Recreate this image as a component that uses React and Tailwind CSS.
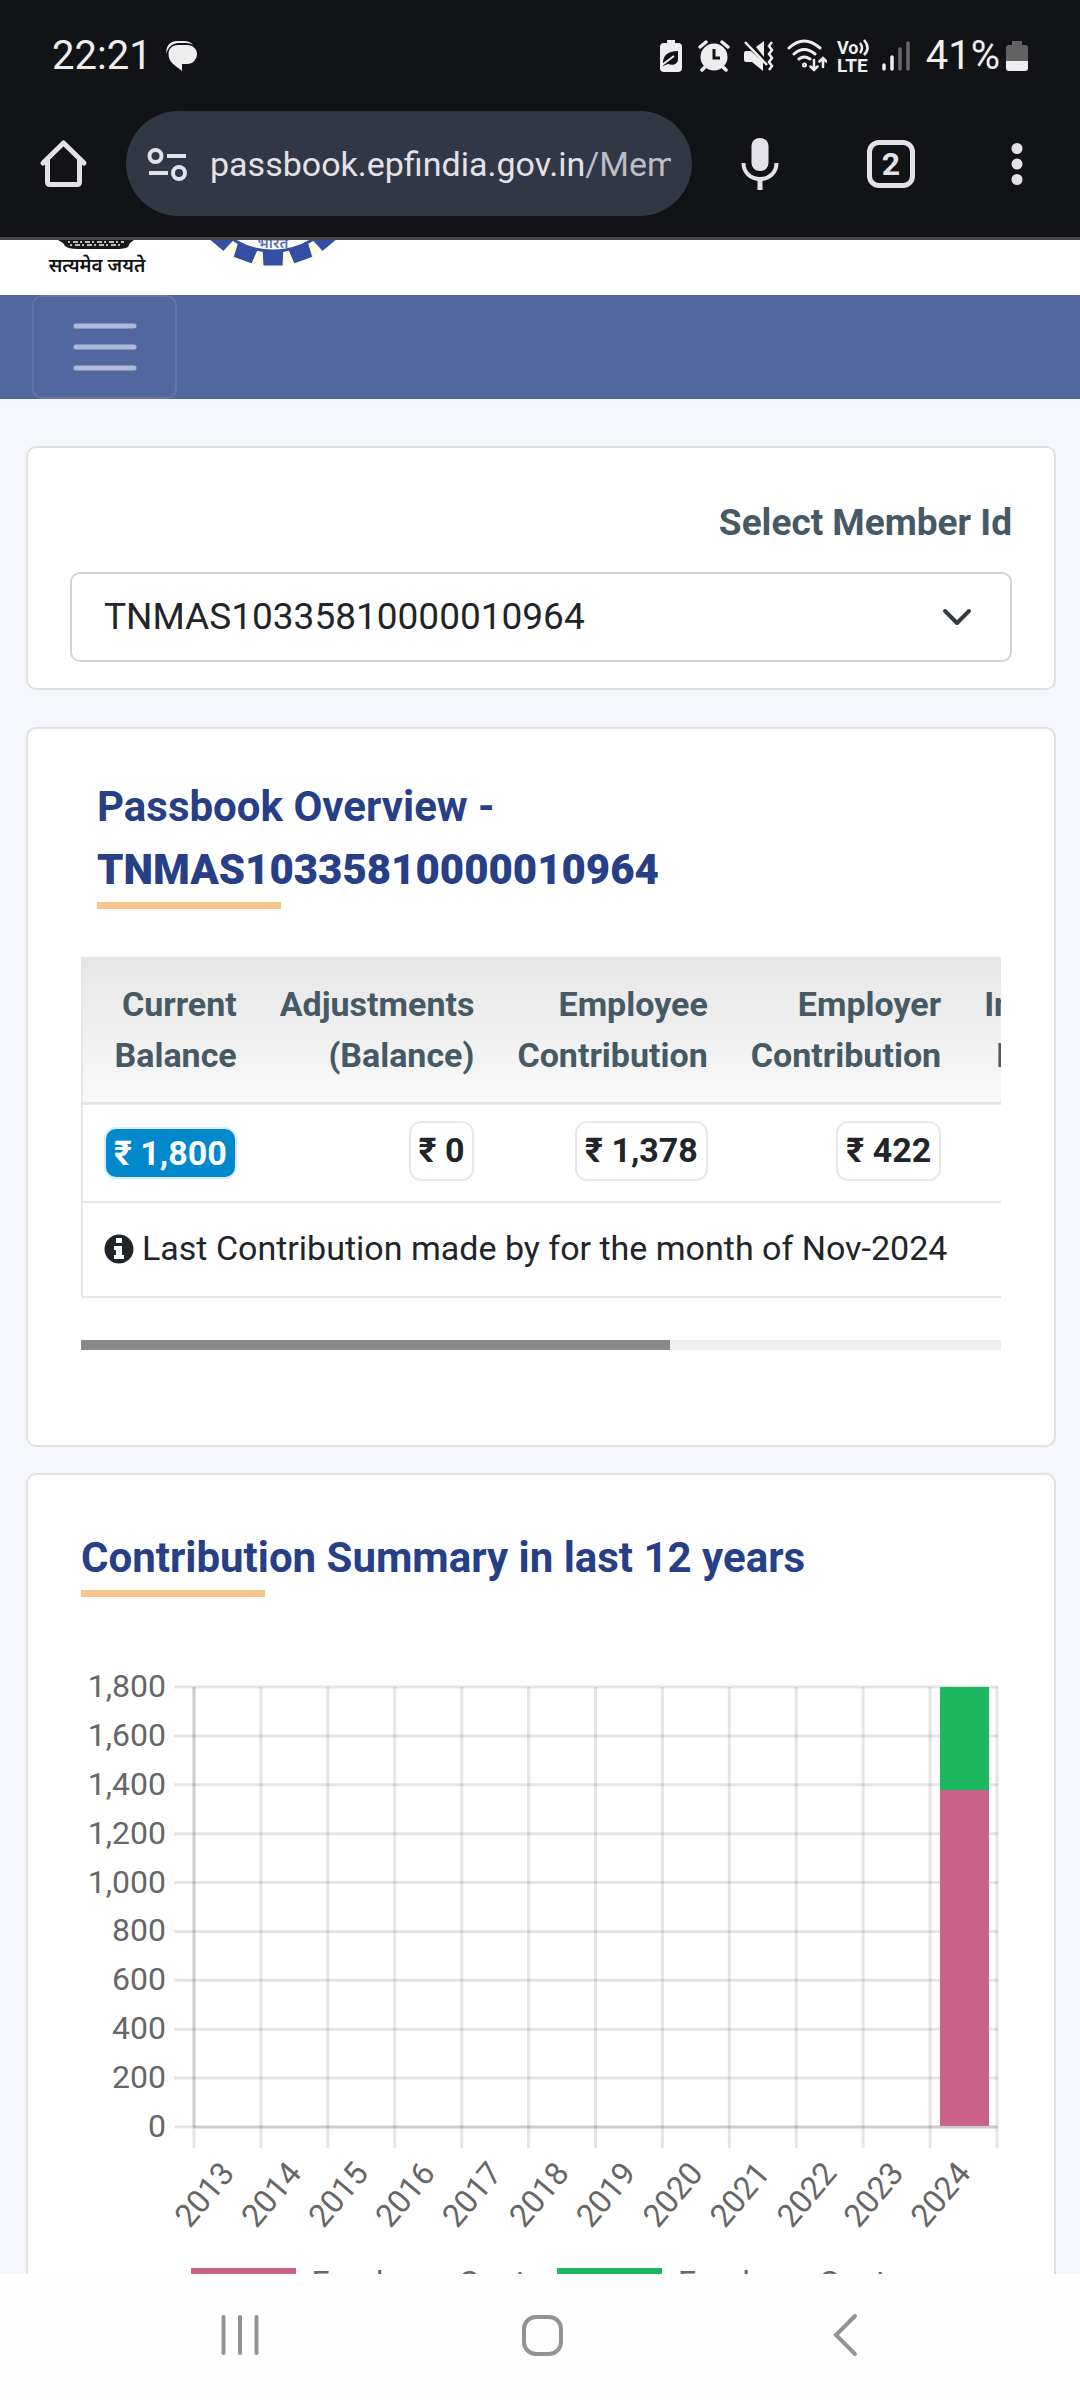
import React from "react";

const YEARS = [2013, 2014, 2015, 2016, 2017, 2018, 2019, 2020, 2021, 2022, 2023, 2024];
const TICKS = ["1,800", "1,600", "1,400", "1,200", "1,000", "800", "600", "400", "200", "0"];
const MEMBER_ID = "TNMAS10335810000010964";

const PLOT = { left: 113, right: 916, top: 27, bottom: 467 };
const STEP_X = (PLOT.right - PLOT.left) / YEARS.length;
const STEP_Y = (PLOT.bottom - PLOT.top) / (TICKS.length - 1);

function StatusBar() {
  return (
    <div className="flex h-[111px] items-center justify-between pr-[52px] pl-[52px] text-[#eeeeee]">
      <div className="flex items-center gap-[14px]">
        <span className="text-[40px] leading-none">22:21</span>
        <svg width="32" height="32" viewBox="0 0 32 32" fill="currentColor" aria-label="Message">
          <path d="M0.500 14C-0.500 6 4 1 11 1H17C22 1 25 2 27 5C24 3 21 3 17 3H12C5 4 1.500 8 0.500 14Z" />
          <path d="M12 5H21C27 5 31 9 31 14S27 24 21 24H16V31L7 24C4 21 2.500 18 2.500 14C2.500 9 6 5 12 5Z" />
        </svg>
      </div>
      <div className="flex items-center gap-[14px]">
        <div className="flex items-center gap-[10px]">
          <svg width="32" height="34" viewBox="0 0 32 34" aria-label="Power saving">
            <path d="M12 1H20V4H23Q27 4 27 8V29Q27 33 23 33H9Q5 33 5 29V8Q5 4 9 4H12Z" fill="#eee" />
            <path d="M23 12V20C23 25 18 27 13 25L8 27V24C8 17 12 12 23 12Z" fill="#121316" />
            <path d="M7 26L19 17" stroke="#eee" strokeWidth="2" />
          </svg>
          <svg width="35" height="32" viewBox="0 0 35 32" fill="currentColor" aria-label="Alarm">
            <circle cx="17" cy="17" r="13.500" />
            <path d="M3 7L9 2M31 7L25 2M8 27L5 30M26 27L29 30" stroke="currentColor" strokeWidth="3.500" strokeLinecap="round" />
            <path d="M17 9V18H23" fill="none" stroke="#121316" strokeWidth="3" />
          </svg>
          <svg width="35" height="32" viewBox="0 0 35 32" fill="currentColor" aria-label="Vibrate">
            <path d="M4 11H9L21 22V31L10 22H4Q2 22 2 20V13Q2 11 4 11Z M14 7L22 1V17Z" />
            <path d="M3 2L25 25" stroke="currentColor" strokeWidth="2.500" />
            <path d="M30 2L27 6L30 10L27 14L30 18L27 22L30 26L27 30" fill="none" stroke="currentColor" strokeWidth="2.500" />
          </svg>
          <svg width="40" height="34" viewBox="0 0 40 34" fill="none" stroke="currentColor" strokeWidth="3" strokeLinecap="round" aria-label="Wi-Fi">
            <path d="M2 9Q17 -5 33 9M7 15Q17 6 28 15M12 20Q17 16 23 20" />
            <circle cx="17.500" cy="26" r="1" />
            <path d="M27 21V31M23.500 27.500L27 31L30.500 27.500M36 28V20M32.500 22.500L36 19L39.500 22.500" strokeWidth="2.500" />
          </svg>
          <svg width="35" height="34" viewBox="0 0 35 34" fill="currentColor" className="overflow-visible" aria-label="VoLTE">
            <text x="0" y="15" fontSize="18" fontWeight="700">Vo</text>
            <text x="0" y="33" fontSize="19" fontWeight="700">LTE</text>
            <path d="M23 4Q27 9 23 14M27 1Q34 9 27 16" fill="none" stroke="currentColor" strokeWidth="2.500" />
          </svg>
          <svg width="30" height="32" viewBox="0 0 30 32" fill="none" stroke="currentColor" strokeWidth="3.500" strokeLinecap="round" aria-label="Signal">
            <path d="M2 25V29M10 17V29" />
            <path d="M18 9V29M26 3V29" stroke="#69696b" />
          </svg>
        </div>
        <div className="flex items-center gap-[6px]">
          <span className="text-[40px] leading-none">41%</span>
          <svg width="22" height="32" viewBox="0 0 22 32" aria-label="Battery">
            <path d="M6 1H16V5H19Q22 5 22 8V21H0V8Q0 5 3 5H6Z" fill="#636365" />
            <path d="M0 21H22V28Q22 31 19 31H3Q0 31 0 28Z" fill="#eee" />
          </svg>
        </div>
      </div>
    </div>
  );
}

function AddressBar() {
  return (
    <div className="flex items-center pr-[56px] pb-[21px] pl-[38px] text-[#e3e2e9]">
      <button aria-label="Home" className="shrink-0">
        <svg width="50" height="50" viewBox="0 0 50 50" fill="none" stroke="currentColor" strokeWidth="5" strokeLinecap="round" strokeLinejoin="round">
          <path d="M5 24L25.500 4L46 24M9.500 21V43Q9.500 45.500 12 45.500H39Q41.500 45.500 41.500 43V21" />
        </svg>
      </button>
      <div className="ml-[38px] flex h-[105px] min-w-0 flex-1 items-center rounded-full bg-[#313744] pr-[21px] pl-[20px]">
        <button aria-label="Site information" className="shrink-0">
          <svg width="44" height="40" viewBox="0 0 44 40" fill="none" stroke="currentColor" strokeWidth="4">
            <circle cx="9.500" cy="12" r="6" />
            <circle cx="33" cy="29" r="6" />
            <path d="M21 12H40M3 29H22" />
          </svg>
        </button>
        <button aria-label="Address" className="ml-[20px] min-w-0 flex-1 overflow-hidden text-left text-[34px] leading-[48px] whitespace-nowrap">
          passbook.epfindia.gov.in<span className="text-[#bcbdc7]">/Mem</span>
        </button>
      </div>
      <button aria-label="Voice search" className="ml-[46px] shrink-0">
        <svg width="44" height="54" viewBox="0 0 44 54" fill="none">
          <rect x="13.500" y="1" width="17" height="33" rx="8" fill="currentColor" />
          <path d="M5.500 26C5.500 36 13 42 22 42S38.500 36 38.500 26" stroke="currentColor" strokeWidth="4" />
          <path d="M22 42V53" stroke="currentColor" strokeWidth="5" />
        </svg>
      </button>
      <button aria-label="Tabs" className="ml-[85px] flex size-[48px] shrink-0 items-center justify-center rounded-[12px] border-5 border-[#e3e2e9] text-[32px] leading-none font-bold">
        2
      </button>
      <button aria-label="More options" className="ml-[95px] shrink-0">
        <svg width="14" height="48" viewBox="0 0 14 48" fill="currentColor">
          <circle cx="7" cy="8.500" r="5.500" />
          <circle cx="7" cy="24" r="5.500" />
          <circle cx="7" cy="39.500" r="5.500" />
        </svg>
      </button>
    </div>
  );
}

function SiteHeader() {
  return (
    <header className="flex h-[55px] items-start gap-[55px] overflow-hidden bg-white pl-[48px]">
      <svg width="100" height="32" viewBox="0 0 100 32" aria-label="State emblem">
        <path d="M10 0H86L82 3L80 7Q76 9 68 9H30Q20 9 17 6L15 3Z" fill="#181818" />
        <path d="M20 2H76M22 5H74" stroke="#bbb" strokeWidth="2" strokeDasharray="2 3 5 2" />
        <text x="49" y="32" textAnchor="middle" fontSize="19" fontWeight="600" fill="#111" fontFamily="'Noto Sans', 'Noto Sans Devanagari', sans-serif">
          सत्यमेव जयते
        </text>
      </svg>
      <svg width="142" height="34" viewBox="0 0 142 34" aria-label="EPFO logo">
        <circle cx="70" cy="-63" r="81" fill="none" stroke="#fdfde2" strokeWidth="14" />
        {[-40, -20, 0, 20, 40].map((a) => (
          <path key={a} d="M59 8H81L80 26H60Z" fill="#354fa3" stroke="#fdfde2" strokeWidth="1" transform={`rotate(${a} 70 -63)`} />
        ))}
        <circle cx="70" cy="-63" r="74" fill="#fff" stroke="#354fa3" strokeWidth="3" />
        <text x="70" y="8" textAnchor="middle" fontSize="15" fontWeight="600" fill="#5b6fb5" fontFamily="'Noto Sans', 'Noto Sans Devanagari', sans-serif">
          भारत
        </text>
      </svg>
    </header>
  );
}

function Card({ className, children }) {
  return <section className={`rounded-[10px] border-2 border-[#dfe0e1] bg-white ${className}`}>{children}</section>;
}

function Title({ children }) {
  return (
    <>
      <h2 className="text-[42px] leading-[63px] font-bold text-[#263f87]">{children}</h2>
      <div className="mt-px h-[7px] w-[184px] bg-[#fac58b]" />
    </>
  );
}

function HeadCell({ first, second }) {
  return (
    <th scope="col" className="pt-[22px] pr-[21px] pb-[21px] pl-[22px] text-right leading-[51px] font-bold">
      {first}
      <br />
      {second}
    </th>
  );
}

function AmountCell({ children }) {
  return (
    <td className="px-[21px] pt-[16px] pb-[20px] text-right">
      <span className="inline-block h-[60px] rounded-[12px] border-2 border-[#e8e8e8] px-[8px] leading-[54px] font-bold">{children}</span>
    </td>
  );
}

function PassbookTable() {
  return (
    <>
      <div className="mt-[48px] overflow-hidden">
        <table className="border-separate border-spacing-0 border-l-2 border-[#e6e6e6] text-[34px] whitespace-nowrap text-[#212529]">
          <thead className="bg-linear-to-b from-[#e6e6e6] to-[#f9f9f9] text-[#455a64]">
            <tr>
              <HeadCell first="Current" second="Balance" />
              <HeadCell first="Adjustments" second="(Balance)" />
              <HeadCell first="Employee" second="Contribution" />
              <HeadCell first="Employer" second="Contribution" />
              <HeadCell first="Interest" second="Earned" />
            </tr>
          </thead>
          <tbody>
            <tr className="align-top *:border-t-3 *:border-b-2 *:border-[#e6e6e6]">
              <td className="px-[21px] pt-[22px] text-right">
                <span className="inline-block h-[52px] rounded-[12px] border-2 border-[#d8ebf7] bg-[#0088cc] px-[8px] leading-[48px] font-bold text-white">₹ 1,800</span>
              </td>
              <AmountCell>₹ 0</AmountCell>
              <AmountCell>₹ 1,378</AmountCell>
              <AmountCell>₹ 422</AmountCell>
              <td />
            </tr>
            <tr>
              <td colSpan={5} className="h-[95px] border-b-2 border-[#e6e6e6] px-[21px] pb-[2px]">
                <div className="flex items-center gap-[8px]">
                  <svg width="30" height="30" viewBox="0 0 30 30" aria-hidden="true">
                    <circle cx="15" cy="15" r="14.500" fill="#212529" />
                    <path d="M12 4H18V9H12ZM10 12H18V21H20V25H10V21H12V16H10Z" fill="#fff" />
                  </svg>
                  <span className="leading-[51px]">Last Contribution made by for the month of Nov-2024</span>
                </div>
              </td>
            </tr>
          </tbody>
        </table>
      </div>
      <div className="mt-[42px] h-[10px] bg-[#f0f0f0]">
        <div className="h-full w-[64%] bg-[#888888]" />
      </div>
    </>
  );
}

function ContributionChart() {
  return (
    <svg viewBox="0 0 920 600" className="mt-[63px] block w-full" role="img" aria-label="Contributions per year">
      <g stroke="#000" strokeOpacity="0.1" strokeWidth="3">
        {TICKS.map((t, i) => (
          <line key={t} x1="93" x2={PLOT.right + 1} y1={PLOT.top + i * STEP_Y} y2={PLOT.top + i * STEP_Y} />
        ))}
        {[...YEARS, "end"].map((y, i) => (
          <line key={y} x1={PLOT.left + i * STEP_X} x2={PLOT.left + i * STEP_X} y1={PLOT.top} y2="488" />
        ))}
        <line x1={PLOT.left} x2={PLOT.left} y1={PLOT.top} y2={PLOT.bottom} />
        <line x1={PLOT.left} x2={PLOT.right} y1={PLOT.bottom} y2={PLOT.bottom} />
      </g>
      <rect x="859" y="27" width="49" height="103" fill="#1bb85f" />
      <rect x="859" y="130" width="49" height="336" fill="#cb6289" />
      <g fill="#666" fontSize="32">
        {TICKS.map((t, i) => (
          <text key={t} x="85" y={PLOT.top + i * STEP_Y + 10} textAnchor="end">
            {t}
          </text>
        ))}
        {YEARS.map((y, i) => {
          const x = PLOT.left + (i + 0.5) * STEP_X;
          return (
            <text key={y} x={x} y="518" textAnchor="end" transform={`rotate(-50 ${x} 507)`}>
              {y}
            </text>
          );
        })}
      </g>
    </svg>
  );
}

function Legend() {
  return (
    <ul className="mt-[8px] flex items-start justify-center gap-[23px] pl-[3px] text-[32px] leading-[28px] whitespace-nowrap text-[#666666]">
      <li className="flex gap-[16px]">
        <span className="h-[32px] w-[105px] bg-[#cb6289]" />
        Employee Cont.
      </li>
      <li className="flex gap-[16px]">
        <span className="h-[32px] w-[105px] bg-[#1bb85f]" />
        Employer Cont.
      </li>
    </ul>
  );
}

function SystemNav() {
  return (
    <nav className="flex h-[126px] shrink-0 items-center justify-between bg-[#fefefe] px-[217px] pb-[5px] text-[#939393]">
      <button aria-label="Recents">
        <svg width="46" height="46" viewBox="0 0 46 46" stroke="currentColor" strokeWidth="4" strokeLinecap="round">
          <path d="M6.500 5V41M23 5V41M39.500 5V41" />
        </svg>
      </button>
      <button aria-label="Home">
        <svg width="46" height="46" viewBox="0 0 46 46" fill="none" stroke="currentColor" strokeWidth="4">
          <rect x="7" y="5" width="37" height="37" rx="12" />
        </svg>
      </button>
      <button aria-label="Back">
        <svg width="46" height="46" viewBox="0 0 46 46" fill="none" stroke="currentColor" strokeWidth="4" strokeLinecap="round">
          <path d="M38 4L19 23L38 42" />
        </svg>
      </button>
    </nav>
  );
}

export default function App() {
  return (
    <div className="flex h-screen flex-col bg-[#f5f6fb] font-[Roboto,'Noto_Sans',sans-serif]">
      <div className="shrink-0 border-b-3 border-[#47464f] bg-[#121316]">
        <StatusBar />
        <AddressBar />
      </div>
      <div className="min-h-0 flex-1 overflow-hidden">
        <SiteHeader />
        <div className="bg-[#5266a0] pl-[32px]">
          <button aria-label="Toggle navigation" className="flex h-[104px] w-[145px] items-center justify-center rounded-[10px] border-2 border-[#6375aa]">
            <svg width="64" height="50" viewBox="0 0 64 50" stroke="#b1b9d9" strokeWidth="5" strokeLinecap="round">
              <path d="M3 4H61M3 25H61M3 46H61" />
            </svg>
          </button>
        </div>
        <main className="pt-[47px] pr-[24px] pl-[26px]">
          <Card className="px-[42px] pt-[47px] pb-[26px]">
            <label htmlFor="member" className="block text-right text-[37px] leading-[56px] font-bold text-[#455a64]">
              Select Member Id
            </label>
            <div className="relative mt-[21px]">
              <select id="member" defaultValue={MEMBER_ID} className="block h-[90px] w-full appearance-none rounded-[10px] border-2 border-[#ced4da] bg-white pr-[100px] pl-[32px] text-[37px] text-[#212529]">
                <option>{MEMBER_ID}</option>
              </select>
              <svg className="pointer-events-none absolute top-[34px] right-[38px]" width="34" height="24" viewBox="0 0 34 24" fill="none" stroke="#343a40" strokeWidth="4" strokeLinecap="round" strokeLinejoin="round">
                <path d="M5 5L17 17L29 5" />
              </svg>
            </div>
          </Card>
          <Card className="mt-[37px] px-[53px] pt-[46px] pb-[95px]">
            <div className="pl-[16px]">
              <Title>
                Passbook Overview -<br />
                <span className="font-black">{MEMBER_ID}</span>
              </Title>
            </div>
            <PassbookTable />
          </Card>
          <Card className="mt-[26px] px-[53px] pt-[51px] pb-[53px]">
            <Title>Contribution Summary in last 12 years</Title>
            <ContributionChart />
            <Legend />
          </Card>
        </main>
      </div>
      <SystemNav />
    </div>
  );
}
